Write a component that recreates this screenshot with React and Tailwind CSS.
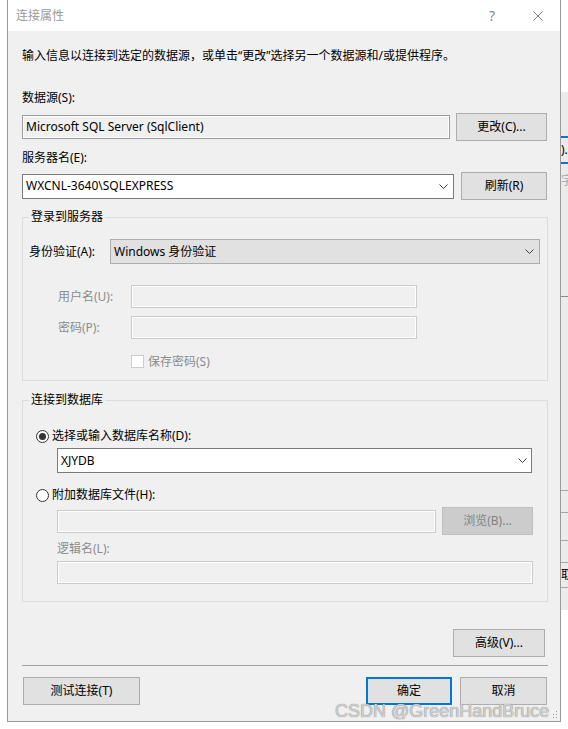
import React from "react";

const Chevron = () => (
  <svg width="9" height="5" viewBox="0 0 9 5" className="shrink-0">
    <polyline points="0.5,0.5 4.5,4.5 8.5,0.5" fill="none" stroke="#404040" strokeWidth="1" />
  </svg>
);

const Btn = ({ className = "", children }) => (
  <div className={"h-[28px] shrink-0 bg-[#e1e1e1] border border-[#adadad] flex items-center justify-center " + className}>
    {children}
  </div>
);

export default function App() {
  return (
    <div className="relative w-[568px] h-[729px] bg-white flex overflow-hidden font-['Noto_Sans','Noto_Sans_CJK_SC',sans-serif] text-[12px] leading-[16px] text-black">
      <div className="w-[7px] shrink-0" />

      {/* dialog window */}
      <div className="w-[554px] h-[722px] shrink-0 flex flex-col border-x border-b border-[#9a9a9a] bg-[#f0f0f0]">
        {/* title bar */}
        <div className="h-[31px] shrink-0 bg-white flex items-center pl-[8px] pr-[17px]">
          <span className="text-[#9a9a9a]">连接属性</span>
          <span className="ml-auto w-[10px] text-center text-[14px] text-[#8a8a8a]">?</span>
          <svg width="10" height="10" viewBox="0 0 10 10" className="ml-[36px]">
            <line x1="0.5" y1="0.5" x2="9.5" y2="9.5" stroke="#7a7a7a" strokeWidth="1" />
            <line x1="9.5" y1="0.5" x2="0.5" y2="9.5" stroke="#7a7a7a" strokeWidth="1" />
          </svg>
        </div>

        {/* body */}
        <div className="flex flex-col pl-[14px] pr-[12px]">
          <p className="mt-[17px]">输入信息以连接到选定的数据源，或单击“更改”选择另一个数据源和/或提供程序。</p>

          <p className="mt-[26px]">数据源(S):</p>
          <div className="mt-[7px] h-[28px] flex items-center justify-between pr-[1px]">
            <div className="w-[428px] h-[24px] border border-[#9c9c9c] bg-[#f0f0f0] shadow-[inset_0_0_0_1px_#ffffff] flex items-center pl-[3px]">
              Microsoft SQL Server (SqlClient)
            </div>
            <Btn className="w-[91px]">更改(C)...</Btn>
          </div>

          <p className="mt-[9px]">服务器名(E):</p>
          <div className="mt-[6px] h-[28px] flex items-center justify-between pr-[1px]">
            <div className="w-[432px] h-[25px] border border-[#7a7a7a] bg-white flex items-center pl-[3px] pr-[5px]">
              <span className="flex-1">WXCNL-3640\SQLEXPRESS</span>
              <Chevron />
            </div>
            <Btn className="w-[86px]">刷新(R)</Btn>
          </div>

          {/* group: login */}
          <fieldset className="mt-[9px] h-[172px] border border-[#dcdcdc]">
            <legend className="ml-[6px] px-[2px]">登录到服务器</legend>
            <div className="pl-[6px] flex flex-col">
              <div className="mt-[14px] h-[25px] flex items-center">
                <span className="w-[81px]">身份验证(A):</span>
                <div className="w-[430px] h-[25px] border border-[#adadad] bg-[#e1e1e1] flex items-center pl-[3px] pr-[5px]">
                  <span className="flex-1">Windows 身份验证</span>
                  <Chevron />
                </div>
              </div>
              <div className="mt-[21px] h-[23px] flex items-center">
                <span className="w-[102px] pl-[29px] text-[#8c8c8c]">用户名(U):</span>
                <div className="w-[286px] h-[23px] border border-[#cccccc] bg-[#f0f0f0] shadow-[inset_0_0_0_1px_#ffffff]" />
              </div>
              <div className="mt-[8px] h-[23px] flex items-center">
                <span className="w-[102px] pl-[29px] text-[#8c8c8c]">密码(P):</span>
                <div className="w-[286px] h-[23px] border border-[#cccccc] bg-[#f0f0f0] shadow-[inset_0_0_0_1px_#ffffff]" />
              </div>
              <div className="mt-[16px] h-[13px] flex items-center">
                <div className="ml-[102px] w-[13px] h-[13px] border border-[#cccccc] bg-white" />
                <span className="ml-[4px] text-[#8c8c8c]">保存密码(S)</span>
              </div>
            </div>
          </fieldset>

          {/* group: database */}
          <fieldset className="mt-[11px] h-[210px] border border-[#dcdcdc]">
            <legend className="ml-[6px] px-[2px]">连接到数据库</legend>
            <div className="pl-[13px] flex flex-col">
              <div className="mt-[20px] h-[16px] flex items-center">
                <div className="w-[13px] h-[13px] rounded-full border border-[#333333] bg-white flex items-center justify-center">
                  <div className="w-[7px] h-[7px] rounded-full bg-[#333333]" />
                </div>
                <span className="ml-[3px]">选择或输入数据库名称(D):</span>
              </div>
              <div className="mt-[4px] ml-[21px] w-[475px] h-[25px] border border-[#7a7a7a] bg-white flex items-center pl-[3px] pr-[4px]">
                <span className="flex-1">XJYDB</span>
                <Chevron />
              </div>
              <div className="mt-[14px] h-[16px] flex items-center">
                <div className="w-[13px] h-[13px] rounded-full border border-[#333333] bg-white" />
                <span className="ml-[3px]">附加数据库文件(H):</span>
              </div>
              <div className="mt-[4px] h-[28px] flex items-center">
                <div className="ml-[21px] w-[379px] h-[23px] border border-[#cccccc] bg-[#f0f0f0] shadow-[inset_0_0_0_1px_#ffffff]" />
                <div className="ml-[6px] w-[91px] h-[28px] bg-[#cccccc] border border-[#bfbfbf] flex items-center justify-center text-[#838383]">
                  浏览(B)...
                </div>
              </div>
              <p className="mt-[6px] ml-[21px] text-[#8c8c8c]">逻辑名(L):</p>
              <div className="mt-[4px] ml-[21px] w-[476px] h-[23px] border border-[#cccccc] bg-[#f0f0f0] shadow-[inset_0_0_0_1px_#ffffff]" />
            </div>
          </fieldset>

          <div className="mt-[27px] flex justify-end pr-[3px]">
            <Btn className="w-[92px]">高级(V)...</Btn>
          </div>

          <div className="mt-[8px] h-[1px] bg-[#a0a0a0]" />

          <div className="mt-[11px] flex items-center pr-[1px]">
            <Btn className="ml-[1px] w-[117px]">测试连接(T)</Btn>
            <div className="ml-auto w-[86px] h-[28px] bg-[#e1e1e1] border-2 border-[#0078d7] flex items-center justify-center">确定</div>
            <Btn className="ml-[8px] w-[87px]">取消</Btn>
          </div>
        </div>
      </div>

      {/* window behind, right edge */}
      <div className="relative w-[7px] shrink-0 h-full">
        <div className="absolute left-0 top-[92px] w-full h-[518px] bg-[#ebebeb]" />
        <div className="absolute left-0 top-[136px] w-full h-[2px] bg-[#0078d7]" />
        <span className="absolute left-0 top-[142px] whitespace-nowrap">).</span>
        <div className="absolute left-0 top-[162px] w-full h-[2px] bg-[#0078d7]" />
        <span className="absolute left-0 top-[173px] whitespace-nowrap text-[#a8a8a8]">字</span>
        <div className="absolute left-0 top-[296px] w-full h-[1px] bg-[#8a8a8a]" />
        <div className="absolute left-0 top-[490px] w-full h-[1px] bg-[#a8a8a8]" />
        <div className="absolute left-0 top-[512px] w-full h-[1px] bg-[#a8a8a8]" />
        <div className="absolute left-0 top-[540px] w-full h-[1px] bg-[#a8a8a8]" />
        <div className="absolute left-0 top-[562px] w-full h-[1px] bg-[#a8a8a8]" />
        <span className="absolute left-0 top-[567px] whitespace-nowrap">取</span>
        <div className="absolute left-0 top-[587px] w-full h-[1px] bg-[#a8a8a8]" />
      </div>

      {/* size grip */}
      <svg className="absolute left-[552px] top-[711px]" width="6" height="8" viewBox="0 0 6 8">
        <rect x="4" y="0" width="1" height="1" fill="#9a9a9a" />
        <rect x="4" y="3" width="1" height="1" fill="#9a9a9a" />
        <rect x="1" y="3" width="1" height="1" fill="#9a9a9a" />
        <rect x="4" y="6" width="1" height="1" fill="#9a9a9a" />
        <rect x="1" y="6" width="1" height="1" fill="#9a9a9a" />
      </svg>

      {/* watermark */}
      <div className="absolute left-[335px] top-[700px] text-[18px] leading-[22px] font-['Liberation_Sans',sans-serif] text-[#cfcfcf] [text-shadow:0_0_1px_#6f6f6f] whitespace-nowrap">
        CSDN @GreenHandBruce
      </div>
    </div>
  );
}
